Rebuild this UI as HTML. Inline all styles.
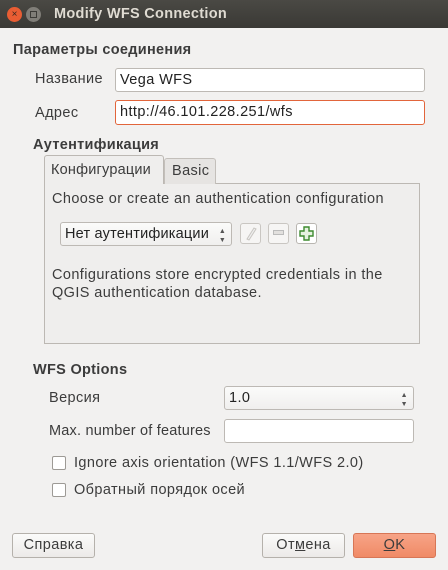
<!DOCTYPE html>
<html><head><meta charset="utf-8"><style>
*{box-sizing:border-box;margin:0;padding:0}
body{width:448px;height:570px;background:#f2f1f0;font-family:"Liberation Sans","DejaVu Sans",sans-serif;font-size:14.5px;letter-spacing:0.4px;color:#3c3c3c;position:relative;overflow:hidden}
.a{position:absolute;white-space:nowrap}
.b{font-weight:bold;letter-spacing:0.3px}
.in{position:absolute;background:#fff;border:1px solid #bdb9b4;border-radius:3px;padding-left:4px;line-height:22px;color:#222;white-space:nowrap}
.cb{position:absolute;width:14px;height:14px;border:1px solid #9d9a95;border-radius:2px;background:#fff}
.btn{position:absolute;height:25px;border:1px solid #b5b1ab;border-radius:3px;background:linear-gradient(#fbfbfa,#eceae8);text-align:center;line-height:23px;color:#3c3c3c}
.ic{position:absolute;width:21px;height:21px;border:1px solid #c9c6c2;border-radius:3px;background:#f6f5f4}
</style></head><body>
<div class="a" style="left:0;top:0;width:448px;height:28px;background:linear-gradient(#4a4944,#3a3935)"></div>
<div class="a" style="left:7px;top:7px;width:15px;height:15px;border-radius:50%;background:#e95d33;color:#3a2a20;font-size:10px;text-align:center;line-height:15px;letter-spacing:0">×</div>
<div class="a" style="left:26px;top:7px;width:15px;height:15px;border-radius:50%;background:#807e78"><div style="margin:4px;width:7px;height:7px;border:1px solid #3c3b37"></div></div>
<div class="a b" style="left:54px;top:6px;color:#dfdbd2;font-size:14.5px">Modify WFS Connection</div>

<div class="a b" style="left:13px;top:42px">Параметры соединения</div>
<div class="a" style="left:35px;top:71px">Название</div>
<div class="in" style="left:115px;top:68px;width:310px;height:24px">Vega WFS</div>
<div class="a" style="left:35px;top:105px">Адрес</div>
<div class="in" style="left:115px;top:100px;width:310px;height:25px;border-color:#e2653b">http://46.101.228.251/wfs</div>

<div class="a b" style="left:33px;top:137px">Аутентификация</div>
<div class="a" style="left:44px;top:183px;width:376px;height:161px;border:1px solid #bcb8b3;background:#efeeed"></div>
<div class="a" style="left:164px;top:158px;width:52px;height:26px;border:1px solid #c3bfba;border-bottom:none;border-radius:3px 3px 0 0;background:#e6e4e2;padding:4px 0 0 7px">Basic</div>
<div class="a" style="left:44px;top:155px;width:120px;height:29px;border:1px solid #bcb8b3;border-bottom:none;border-radius:3px 3px 0 0;background:#efeeed;padding:6px 0 0 6px;letter-spacing:0.2px">Конфигурации</div>
<div class="a" style="left:52px;top:191px">Choose or create an authentication configuration</div>
<div class="in" style="left:60px;top:222px;width:172px;height:24px;background:linear-gradient(#fbfbfa,#f0efee);padding-left:4px;letter-spacing:0.2px">Нет аутентификации<span style="position:absolute;right:5px;font-size:7px;line-height:9px;top:4px;color:#555">▲<br>▼</span></div>
<div class="ic" style="left:240px;top:223px"><svg width="19" height="19"><path d="M6 15 L13 4 L15 5 L8 16 Z" fill="#eee" stroke="#c8c5c1"/></svg></div>
<div class="ic" style="left:268px;top:223px"><div style="margin:6px 4px;width:11px;height:5px;border:1px solid #bbb;background:#e2e0de"></div></div>
<div class="ic" style="left:296px;top:223px;border-color:#b9b6b1;background:#fff"><svg width="19" height="19"><path d="M7 3h5v4h4v5h-4v4H7v-4H3V7h4z" fill="#e6f2e0" stroke="#3d8a2f" stroke-width="1.4"/></svg></div>
<div class="a" style="left:52px;top:266px;line-height:18px">Configurations store encrypted credentials in the<br>QGIS authentication database.</div>

<div class="a b" style="left:33px;top:362px">WFS Options</div>
<div class="a" style="left:49px;top:390px">Версия</div>
<div class="in" style="left:224px;top:386px;width:190px;height:24px;background:linear-gradient(#fbfbfa,#f0efee)">1.0<span style="position:absolute;right:5px;top:4px;font-size:7px;line-height:9px;color:#555">▲<br>▼</span></div>
<div class="a" style="left:49px;top:423px;letter-spacing:0.2px">Max. number of features</div>
<div class="in" style="left:224px;top:419px;width:190px;height:24px"></div>
<div class="cb" style="left:52px;top:456px"></div>
<div class="a" style="left:74px;top:455px">Ignore axis orientation (WFS 1.1/WFS 2.0)</div>
<div class="cb" style="left:52px;top:483px"></div>
<div class="a" style="left:74px;top:482px">Обратный порядок осей</div>

<div class="btn" style="left:12px;top:533px;width:83px">Справка</div>
<div class="btn" style="left:262px;top:533px;width:83px">От<u>м</u>ена</div>
<div class="btn" style="left:353px;top:533px;width:83px;background:linear-gradient(#f7a487,#f08a66);border-color:#d77656"><u>O</u>K</div>
</body></html>
